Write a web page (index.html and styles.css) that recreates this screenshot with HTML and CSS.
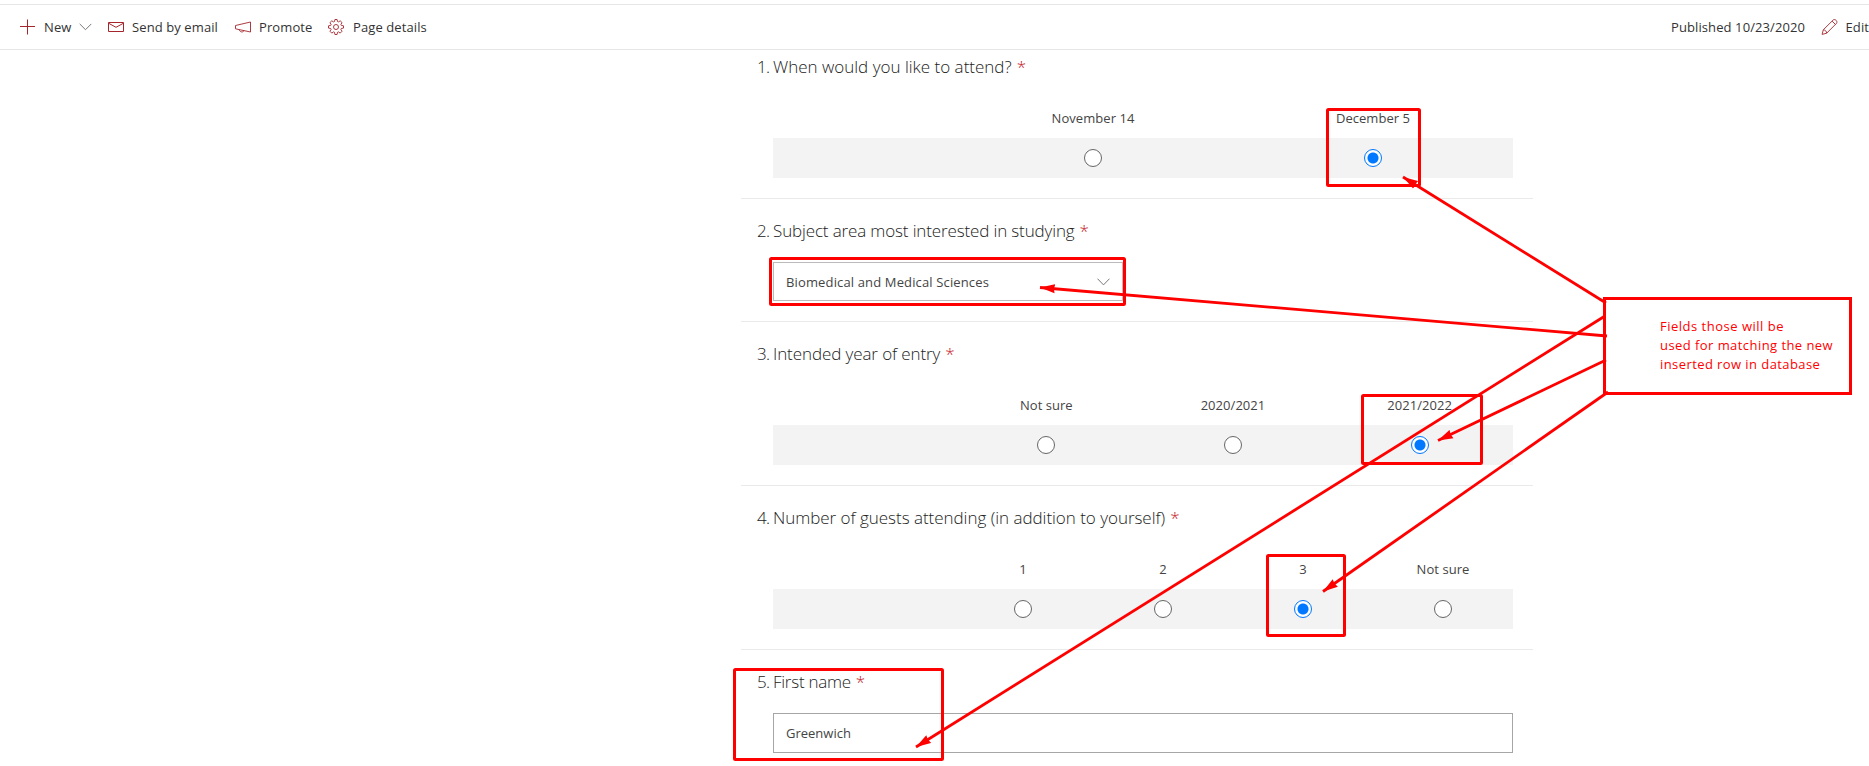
FILE: index.html
```html
<!DOCTYPE html>
<html lang="en">
<head>
<meta charset="utf-8">
<title>Event registration</title>
<link rel="stylesheet" href="styles.css">
</head>
<body>
<header class="bar">
  <div class="cmds">
    <div class="cmd new"><svg class="ic" viewBox="0 0 16 16"><path d="M7.500 .5v15M0 7.500h15"/></svg><span>New</span><svg class="chev" viewBox="0 0 13 8"><path d="M.7.9 6.500 6.700 12.300.9"/></svg></div>
    <div class="cmd send"><svg class="ic" viewBox="0 0 16 16"><path d="M.5 3.500h15v9H.5zM.5 4.200 8 8.300l7.500-4.100"/></svg><span>Send by email</span></div>
    <div class="cmd promote"><svg class="ic thin" viewBox="0 0 16 16"><path d="M15.500 3v10L.5 9.800V6.500zM4.300 10.700c.3 2.800 4.400 2.800 4.600.9"/></svg><span>Promote</span></div>
    <div class="cmd details"><svg class="ic thin" viewBox="0 0 16 16"><circle cx="8" cy="8" r="2.500"/><path d="M6.900.5h2.200l.4 2 1 .4L12.200 1.800l1.900 1.900-1.200 1.700.4 1 2.200.4v2.300l-2.200.4-.4 1 1.200 1.700-1.900 1.900-1.700-1.200-1 .4-.4 2.200H6.900l-.4-2.200-1-.4-1.700 1.200-1.900-1.900 1.200-1.700-.4-1-2.200-.4V6.800l2.200-.4.4-1-1.200-1.700 1.900-1.900 1.700 1.100 1-.4z"/></svg><span>Page details</span></div>
  </div>
  <div class="right">
    <span class="published">Published 10/23/2020</span>
    <div class="cmd edit"><svg class="ic thin" viewBox="0 0 16 16"><path d="M.6 15.400 1.800 10.800 11.800.9c1.800-1.300 4.600 1.400 3.300 3.300L5.200 14.200zM1.800 10.800c2 .2 3.200 1.400 3.400 3.400M10.600 2.100l3.300 3.300"/></svg><span>Edit</span></div>
  </div>
</header>
<main class="form">
  <section class="q first">
    <h2><b>1.</b><span class="t1">When would you like to attend?</span><i>*</i></h2>
    <div class="labels"><span>November 14</span><span>December 5</span></div>
    <div class="row"><span><em class="radio"></em></span><span><em class="radio on"></em></span></div>
  </section>
  <section class="q">
    <h2><b>2.</b><span class="t2">Subject area most interested in studying</span><i>*</i></h2>
    <div class="select"><span class="subject">Biomedical and Medical Sciences</span><svg class="chev" viewBox="0 0 13 8"><path d="M.5.7 6.500 6.900 12.500.7"/></svg></div>
  </section>
  <section class="q">
    <h2><b>3.</b><span class="t3">Intended year of entry</span><i>*</i></h2>
    <div class="labels"><span>Not sure</span><span>2020/2021</span><span>2021/2022</span></div>
    <div class="row"><span><em class="radio"></em></span><span><em class="radio"></em></span><span><em class="radio on"></em></span></div>
  </section>
  <section class="q">
    <h2><b>4.</b><span class="t4">Number of guests attending (in addition to yourself)</span><i>*</i></h2>
    <div class="labels"><span>1</span><span>2</span><span>3</span><span>Not sure</span></div>
    <div class="row"><span><em class="radio"></em></span><span><em class="radio"></em></span><span><em class="radio on"></em></span><span><em class="radio"></em></span></div>
  </section>
  <section class="q last">
    <h2><b>5.</b><span class="t5">First name</span><i>*</i></h2>
    <div class="input"><span>Greenwich</span></div>
  </section>
</main>
<svg class="marks" viewBox="0 0 1869 766">
  <defs><marker id="head" markerUnits="userSpaceOnUse" markerWidth="16" markerHeight="10" refX="15" refY="5" orient="auto"><path d="M15 5 0 .4 1 5 0 9.600z"/></marker></defs>
  <g class="boxes">
    <rect x="1327.500" y="109.500" width="92" height="76" rx="1"/>
    <rect x="770.500" y="258.500" width="354" height="46" rx="1"/>
    <rect x="1362.500" y="395.500" width="119" height="68" rx="1"/>
    <rect x="1267.500" y="555.500" width="77" height="80" rx="1"/>
    <rect x="734.500" y="669.500" width="208" height="90" rx="1"/>
    <rect x="1604.500" y="298.500" width="246" height="95"/>
  </g>
  <g class="arrows">
    <path d="M1606 303 1403 177"/>
    <path d="M1607 336 1040 287.500"/>
    <path d="M1606 360 1438 440.500"/>
    <path d="M1608 392 1323 591.500"/>
    <path d="M1605 316 916 747"/>
  </g>
</svg>
<p class="note"><span class="n1">Fields those will be</span><br><span class="n2">used for matching the new</span><br><span class="n3">inserted row in database</span></p>
</body>
</html>
```
FILE: styles.css
```css
* { box-sizing: border-box; }
body { margin: 0; width: 1869px; height: 766px; overflow: hidden; background: #fff; color: #444; font: 14px/20px "Open Sans", "Noto Sans", sans-serif; }
svg { fill: none; display: block; flex: none; }
.bar { margin-top: 4px; height: 46px; border-top: 1px solid #e6e6e6; border-bottom: 1px solid #e6e6e6; display: flex; align-items: center; justify-content: space-between; padding-left: 20px; font-size: 13px; color: #333; white-space: nowrap; letter-spacing: .1px; }
.cmds, .cmd, .right { display: flex; align-items: center; }
.cmd .ic { width: 16px; height: 16px; stroke: #a4262c; margin-right: 8px; }
.cmd .thin { stroke-width: .9; }
.chev { width: 13px; height: 8px; stroke: #777; }
.new { width: 88px; }
.new .chev { margin-left: 8px; }
.send { width: 127px; }
.promote { width: 93px; }
.cmd.details .ic { margin-right: 9px; }
.right { width: 198px; }
.published { width: 150px; }
.cmd.edit .ic { width: 17px; }
.form { width: 792px; margin-left: 741px; }
.q { height: 164px; padding: 0 20px 20px 17px; border-bottom: 1px solid #eaeaea; }
.q:nth-child(2) { height: 123px; }
.q.first { height: 149px; }
.q.last { border: 0; height: 116px; }
h2 { margin: 0; padding-top: 19px; height: 46px; display: flex; font-size: 17px; line-height: 25px; font-weight: 300; color: #222; white-space: nowrap; }
.first h2 { padding-top: 4px; height: 31px; }
h2 b { width: 16px; margin-left: -1px; font-weight: 300; letter-spacing: -.8px; }
h2 i { margin-left: 5px; font-style: normal; color: #c4161e; }
.t2 { letter-spacing: -.14px; }
.t3 { letter-spacing: -.1px; }
.t4 { letter-spacing: -.03px; }
.t5 { letter-spacing: -.26px; }
.labels, .row { margin-left: 15px; padding-left: 180px; display: grid; grid-auto-flow: column; grid-auto-columns: 1fr; text-align: center; }
.labels { margin-top: 27px; height: 30px; font-size: 13px; line-height: 20px; letter-spacing: .05px; }
.row { height: 40px; background: #f3f3f3; align-items: center; justify-items: center; }
.radio { display: block; width: 18px; height: 18px; border: 1px solid #666; border-radius: 50%; background: #fff; }
.radio.on { border-color: #0078ff; background: radial-gradient(circle, #0078ff 5px, #fff 6px); }
.select, .input { margin-left: 15px; border: 1px solid #bbb; display: flex; align-items: center; justify-content: space-between; padding: 0 12px; font-size: 13px; }
.select { width: 350px; height: 39px; margin-top: 17px; }
.subject { letter-spacing: .14px; }
.input { width: 740px; height: 40px; margin-top: 17px; border-color: #a6a6a6; }
.marks { position: absolute; left: 0; top: 0; width: 1869px; height: 766px; }
.boxes rect { stroke: #f00; stroke-width: 3; }
.arrows path { stroke: #f00; stroke-width: 2.800; marker-end: url(#head); }
#head path { fill: #f00; stroke: none; }
.note { position: absolute; left: 1660px; top: 317px; margin: 0; color: #f00; font-size: 13px; line-height: 19px; white-space: nowrap; }
.n1 { letter-spacing: .5px; }
.n2 { letter-spacing: .44px; }
.n3 { letter-spacing: .42px; }
```
